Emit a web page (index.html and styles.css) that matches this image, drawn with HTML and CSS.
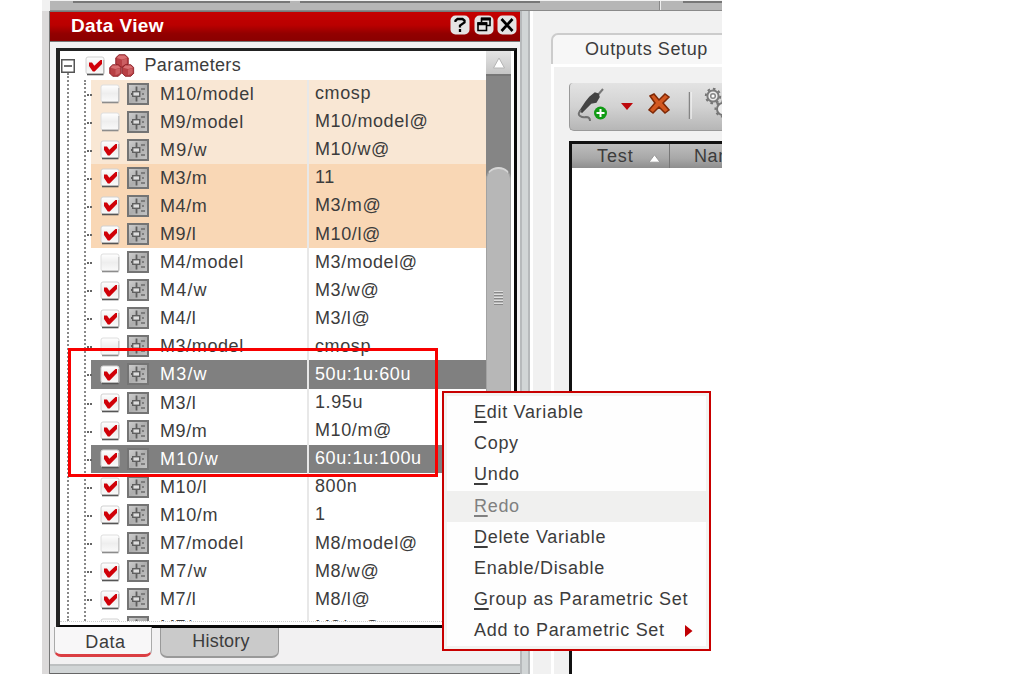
FILE: index.html
```html
<!DOCTYPE html>
<html lang="en">
<head>
<meta charset="utf-8">
<title>Data View</title>
<link rel="stylesheet" href="styles.css">
</head>
<body>
<svg class="defs" width="0" height="0">
  <defs>
    <linearGradient id="boxg" x1="0" y1="0" x2="0" y2="1"><stop offset="0" stop-color="#fff"/><stop offset=".5" stop-color="#eee"/><stop offset="1" stop-color="#fafafa"/></linearGradient>
    <linearGradient id="parg" x1="0" y1="0" x2="1" y2="1"><stop offset="0" stop-color="#d0d0d0"/><stop offset=".5" stop-color="#adadad"/><stop offset="1" stop-color="#c6c6c6"/></linearGradient>
    <symbol id="off" viewBox="0 0 20 20"><rect x="1" y="1" width="18" height="17" rx="2" fill="url(#boxg)" stroke="#dedede"/><path d="M2 18.5h16.5" stroke="#8c8c8c" stroke-width="1.6"/><path d="M18.8 4v14" stroke="#bbb"/></symbol>
    <symbol id="on" viewBox="0 0 20 20"><rect x="1" y="1" width="18" height="17" rx="2" fill="url(#boxg)" stroke="#d0d0d0"/><path d="M2 18.5h16.5" stroke="#555" stroke-width="1.6"/><path d="M18.8 4v14" stroke="#aaa"/><path d="M4 6.5h3l2.3 3.2L15.500 4H17v4L9.700 15.500H7.800L4 10z" fill="#d00008"/></symbol>
    <symbol id="par" viewBox="0 0 22 22"><rect x="1" y="1" width="20" height="20" fill="url(#parg)" stroke="#747474" stroke-width="2"/><path d="M9.500 3.500v15M4 11h2" stroke="#5e5e5e" stroke-width="1.8"/><rect x="5.700" y="8.700" width="7" height="4.600" fill="#ddd" stroke="#606060" stroke-width="1.400"/><path d="M14 6h4M15 11h2M14 16h4" stroke="#6c6c6c" stroke-width="1.600"/></symbol>
    <symbol id="cube" viewBox="0 0 14 14"><path d="M4 .8h6l3.2 3V10L10 13.2H4L.8 10V3.8z" fill="#b84045" stroke="#8b2028"/><path d="M4 1.5h5.7L12.4 4 7 5.4 1.8 4z" fill="#d87073"/><path d="M7 6l4.8-1.4v5L7 12z" fill="#cb5e62"/></symbol>
  </defs>
</svg>
<div class="app">
  <div class="topbar"><i class="edge one"></i><i class="edge two"></i><i class="notch"></i><i class="edge three"></i></div>
  <div class="main">
    <div class="gutter"></div>
    <section class="dock">
      <header class="title"><span>Data View</span>
        <svg viewBox="0 0 20 20"><rect x=".5" y=".5" width="19" height="19" rx="5" fill="#e4e4e4"/><path d="M5.500 7V5.500L7.500 4h5l2 1.500v2L10 10.500v2M10 14v3" fill="none" stroke="#000" stroke-width="2.300"/></svg>
        <svg viewBox="0 0 20 20"><rect x=".5" y=".5" width="19" height="19" rx="5" fill="#e4e4e4"/><path d="M7.500 7V3.500h8.500v7h-3.500M4 8h8.500v7.500H4z" fill="none" stroke="#000" stroke-width="1.600"/><path d="M7 4h9.700M3.500 8.700h9.700" stroke="#000" stroke-width="3"/></svg>
        <svg viewBox="0 0 20 20"><rect x=".5" y=".5" width="19" height="19" rx="5" fill="#e4e4e4"/><path d="M4.500 4l11 12M15.500 4l-11 12" stroke="#000" stroke-width="2.700"/></svg>
      </header>
      <div class="list">
        <div class="tree">
          <div class="root"><svg class="exp" viewBox="0 0 14 14"><path d="M.75.75h12.5v12.5H.75z" fill="#fff" stroke="#555" stroke-width="1.500"/><path d="M3 7h8" stroke="#333" stroke-width="1.400"/></svg><svg class="cb"><use href="#on"/></svg><svg class="cubes" viewBox="0 0 26 24"><use href="#cube" x="6" y="0" width="14" height="14"/><use href="#cube" x="0" y="10" width="13" height="13"/><use href="#cube" x="12.500" y="10" width="13" height="13"/></svg><span>Parameters</span></div>
          <div class="rows">
            <div class="row lt"><svg class="cb"><use href="#off"/></svg><svg class="pi"><use href="#par"/></svg><span class="n">M10/model</span><span class="v">cmosp</span></div>
            <div class="row lt"><svg class="cb"><use href="#off"/></svg><svg class="pi"><use href="#par"/></svg><span class="n">M9/model</span><span class="v">M10/model@</span></div>
            <div class="row lt"><svg class="cb"><use href="#on"/></svg><svg class="pi"><use href="#par"/></svg><span class="n wide">M9/w</span><span class="v">M10/w@</span></div>
            <div class="row dk"><svg class="cb"><use href="#on"/></svg><svg class="pi"><use href="#par"/></svg><span class="n">M3/m</span><span class="v">11</span></div>
            <div class="row dk"><svg class="cb"><use href="#on"/></svg><svg class="pi"><use href="#par"/></svg><span class="n">M4/m</span><span class="v">M3/m@</span></div>
            <div class="row dk"><svg class="cb"><use href="#on"/></svg><svg class="pi"><use href="#par"/></svg><span class="n">M9/l</span><span class="v">M10/l@</span></div>
            <div class="row"><svg class="cb"><use href="#off"/></svg><svg class="pi"><use href="#par"/></svg><span class="n">M4/model</span><span class="v">M3/model@</span></div>
            <div class="row"><svg class="cb"><use href="#on"/></svg><svg class="pi"><use href="#par"/></svg><span class="n wide">M4/w</span><span class="v">M3/w@</span></div>
            <div class="row"><svg class="cb"><use href="#on"/></svg><svg class="pi"><use href="#par"/></svg><span class="n">M4/l</span><span class="v">M3/l@</span></div>
            <div class="row"><svg class="cb"><use href="#off"/></svg><svg class="pi"><use href="#par"/></svg><span class="n">M3/model</span><span class="v">cmosp</span></div>
            <div class="row sel"><svg class="cb"><use href="#on"/></svg><svg class="pi"><use href="#par"/></svg><span class="n wide">M3/w</span><span class="v">50u:1u:60u</span></div>
            <div class="row"><svg class="cb"><use href="#on"/></svg><svg class="pi"><use href="#par"/></svg><span class="n">M3/l</span><span class="v">1.95u</span></div>
            <div class="row"><svg class="cb"><use href="#on"/></svg><svg class="pi"><use href="#par"/></svg><span class="n">M9/m</span><span class="v">M10/m@</span></div>
            <div class="row sel"><svg class="cb"><use href="#on"/></svg><svg class="pi"><use href="#par"/></svg><span class="n wide">M10/w</span><span class="v">60u:1u:100u</span></div>
            <div class="row"><svg class="cb"><use href="#on"/></svg><svg class="pi"><use href="#par"/></svg><span class="n">M10/l</span><span class="v">800n</span></div>
            <div class="row"><svg class="cb"><use href="#on"/></svg><svg class="pi"><use href="#par"/></svg><span class="n">M10/m</span><span class="v">1</span></div>
            <div class="row"><svg class="cb"><use href="#off"/></svg><svg class="pi"><use href="#par"/></svg><span class="n">M7/model</span><span class="v">M8/model@</span></div>
            <div class="row"><svg class="cb"><use href="#on"/></svg><svg class="pi"><use href="#par"/></svg><span class="n wide">M7/w</span><span class="v">M8/w@</span></div>
            <div class="row"><svg class="cb"><use href="#on"/></svg><svg class="pi"><use href="#par"/></svg><span class="n">M7/l</span><span class="v">M8/l@</span></div>
            <div class="row"><svg class="cb"><use href="#on"/></svg><svg class="pi"><use href="#par"/></svg><span class="n">M7/m</span><span class="v">M8/m@</span></div>
          </div>
        </div>
        <div class="scroll"><div class="up"><svg viewBox="0 0 14 12"><path d="M7 1l5.500 10h-11z" fill="#fff" stroke="#b5b5b5"/></svg></div><div class="thumb"><i class="grip"></i></div></div>
      </div>
      <div class="tabs"><div class="tab active">Data</div><div class="tab">History</div></div>
      <div class="foot"></div>
    </section>
    <div class="split"></div>
    <section class="outputs">
      <div class="otab">Outputs Setup</div>
      <div class="pane">
        <div class="tools">
          <svg width="153" height="47" viewBox="0 0 153 47"><path d="M33 6l-6 7" stroke="#777" stroke-width="2"/><path d="M20 14l5-4 3 1 1 3-3 5-5 1-9 9-2-1 6-9z" fill="#444" stroke="#444" stroke-width="1.500"/><path d="M11 27q-4 4-1 6q3 2 6 1q4 0 4 4" fill="none" stroke="#707070" stroke-width="2"/><circle cx="30.500" cy="30" r="6.500" fill="#109b14"/><path d="M26.500 30h8M30.500 26v8" stroke="#fff" stroke-width="2"/><path d="M51 20h12l-6 7z" fill="#bd080c"/><path d="M80 13l4-2 5 6 6-6 4 3-6 6 6 7-4 3-6-6-6 6-4-3 6-7z" fill="#d35820" stroke="#7e2806" stroke-width="1.500"/><path d="M119.500 9v27" stroke="#858585" stroke-width="1.500"/><path d="M121 9v27" stroke="#fff"/><circle cx="143" cy="13" r="5.600" fill="#eee" stroke="#7c7c7c" stroke-width="2"/><circle cx="143" cy="13" r="7.200" fill="none" stroke="#777" stroke-width="2" stroke-dasharray="2.600 3"/><circle cx="143" cy="13" r="2.300" fill="#fff" stroke="#888" stroke-width="1.500"/><circle cx="153" cy="26" r="6" fill="#eee" stroke="#777" stroke-width="2"/><circle cx="153" cy="26" r="7.500" fill="none" stroke="#777" stroke-width="2" stroke-dasharray="2.600 3"/></svg>
        </div>
        <div class="table"><div class="thead"><span class="th">Test<svg width="13" height="9" viewBox="0 0 13 9"><path d="M6.500 .8l5.500 7.400H1z" fill="#fff" stroke="#999"/></svg></span><span class="th2">Name</span></div></div>
      </div>
    </section>
  </div>
</div>
<div class="highlight"></div>
<div class="menu">
  <div><u>E</u>dit Variable</div>
  <div>Copy</div>
  <div><u>U</u>ndo</div>
  <div class="dis"><u>R</u>edo</div>
  <div><u>D</u>elete Variable</div>
  <div>Enable/Disable</div>
  <div><u>G</u>roup as Parametric Set</div>
  <div>Add to Parametric Set<svg viewBox="0 0 8 12"><path d="M0 0l7.500 6L0 12z" fill="#c00004"/></svg></div>
</div>
</body>
</html>
```
FILE: styles.css
```css
* { box-sizing: border-box; }
body { margin: 0; width: 1013px; height: 677px; overflow: hidden; background: #fff; position: relative; font: 18px "Liberation Sans", sans-serif; letter-spacing: .6px; color: #3c3c3c; }
svg { display: block; flex: none; }
.defs { position: absolute; }
.app { width: 680px; height: 674px; margin-left: 42px; display: flex; flex-direction: column; overflow: hidden; background: #f1f1f1; }
.topbar { height: 11px; flex: none; background: #b6b6b6; border-top: 1px solid #f2f2f2; border-bottom: 1px solid #8a8a8a; margin-left: 8px; display: flex; padding-left: 23px; }
.edge { height: 2px; background: #777; }
.one { width: 217px; }
.two { width: 240px; margin-left: 10px; }
.notch { width: 2px; margin-left: 119px; background: #efefef; border-left: 1px solid #888; }
.three { flex: 1; margin-left: 22px; }
.main { flex: 1; display: flex; min-height: 0; }
.gutter { width: 8px; background: #dcdada; border-right: 1px solid #777; }
.dock { width: 470px; display: flex; flex-direction: column; background: #f2f1f2; }
.title { height: 31px; flex: none; background: linear-gradient(#c50000, #ba0000 45%, #920000 75%, #8a0000); border-top: 1px solid #777; border-bottom: 1px solid #777; display: flex; align-items: center; gap: 3.500px; padding: 0 3px 3px 21px; color: #fff; font-weight: bold; font-size: 19px; letter-spacing: .4px; }
.title span { flex: 1; padding-top: 2px; }
.title svg { width: 20px; height: 20px; }
.list { height: 580px; flex: none; margin: 6px 3px 0 6px; border: solid #080808; border-width: 3px 3px 3px 4px; border-top-color: #222; border-left-color: #222; display: flex; background: #fff; padding: 0 3px 3px 0; }
.tree { flex: 1; height: 571px; overflow: hidden; position: relative; border-bottom: 1px dotted #ccc; }
.root { height: 28.500px; display: flex; align-items: center; padding: 1px 0 0 1px; letter-spacing: .35px; }
.exp { width: 14px; height: 14px; margin-right: 9.500px; }
.cb { width: 20px; height: 20px; }
.cubes { width: 26px; height: 24px; margin: 0 10px 0 4px; }
.rows { margin-left: 24px; border-left: 2px dotted #888; padding-left: 5px; }
.row { height: 28.100px; display: flex; align-items: center; position: relative; }
.row::before { content: ""; position: absolute; left: -4px; width: 3px; border-top: 2px dotted #666; top: 14px; }
.row .cb { margin: 1px 7px 0 9px; }
.pi { width: 22px; height: 22px; margin-right: 11px; }
.n { width: 149px; line-height: 28.100px; border-right: 2px solid #e8e8e8; }
.wide { letter-spacing: 1.200px; }
.v { flex: 1; padding-left: 6px; }
.lt { background: #f9e7d4; }
.dk { background: #f9d7b5; }
.sel { background: #808080; color: #fff; }
.tree::after { content: ""; position: absolute; left: 7px; top: 22px; bottom: 0; border-left: 2px dotted #888; }
.scroll { width: 25px; background: #858585; display: flex; flex-direction: column; }
.up { height: 25px; background: linear-gradient(#e4e4e4, #c5c5c5); border-bottom: 2px solid #777; display: grid; place-items: center; }
.up svg { width: 14px; height: 12px; }
.thumb { flex: 1; margin-top: 91px; border: 1px solid #a2a2a2; border-top: 2px solid #d6d6d6; border-radius: 12px 12px 0 0; background: #b7b7b7; padding: 122px 0 0 7px; }
.grip { display: block; width: 9px; height: 14px; background: repeating-linear-gradient(#dedede 0 1px, #888 1px 2px, #b7b7b7 2px 3px); }
.tabs { height: 36px; display: flex; gap: 8px; padding-left: 4px; }
.tab { height: 30px; width: 119px; border: 1px solid #999; border-top: 0; border-bottom: 2px solid #999; border-radius: 0 0 7px 7px; background: #cacaca; text-align: center; line-height: 27px; letter-spacing: .2px; padding-left: 3px; }
.tab.active { width: 98px; background: #f8f7f8; border-color: #aaa; border-bottom: 3px solid #db3e43; line-height: 31px; letter-spacing: .6px; padding-left: 5px; margin-top: -1px; }
.foot { flex: 1; background: #d1d5d6; border-top: 2px solid #bdc0c1; border-bottom: 1px solid #666; }
.split { width: 10px; background: #d1d5d6; border: solid #b6b9bb; border-width: 0 2px; }
.outputs { flex: 1; min-width: 0; border-left: 3px solid #fff; padding: 22px 0 0 18px; display: flex; flex-direction: column; }
.otab { height: 31px; flex: none; border: solid #ccc; border-width: 2px 0 0 2px; border-radius: 7px 0 0 0; background: #f7f7f7; padding: 3px 0 0 32px; line-height: 22px; white-space: nowrap; letter-spacing: .6px; }
.pane { flex: 1; border-left: 3px solid #fff; border-top: 3px solid #fff; padding: 16px 0 0 15px; display: flex; flex-direction: column; }
.tools { height: 48px; flex: none; border: solid #999; border-width: 0 0 1px 1px; border-radius: 4px 0 0 5px; background: linear-gradient(#e3e3e3, #d2d2d2 50%, #b6b6b6); overflow: hidden; }
.table { flex: 1; margin-top: 10px; border: solid #111; border-width: 3px 0 0 3px; background: #fff; overflow: hidden; }
.thead { height: 24px; background: linear-gradient(#bdbdbd, #a8a8a8 60%, #8e8e8e); display: flex; line-height: 24px; }
.th { width: 98px; flex: none; padding-left: 25px; border-right: 1px solid #777; display: flex; align-items: center; gap: 14px; letter-spacing: .9px; }
.th svg { margin-top: 4px; }
.th2 { padding-left: 24px; }
.highlight { position: absolute; left: 68px; top: 348px; width: 370px; height: 129px; border: 3px solid #f80000; }
.menu { position: absolute; left: 442px; top: 391px; width: 269px; height: 260px; border: 2px solid #c80000; background: #fefefe; padding-top: 4px; box-shadow: inset 0 0 0 3px #f3f3f1; }
.menu div { height: 31.200px; line-height: 31.200px; padding-left: 30px; display: flex; align-items: center; white-space: pre; letter-spacing: .7px; }
.menu u { text-underline-offset: 3px; text-decoration-thickness: 1.500px; }
.menu .dis { background: #f0f0ef; color: #808080; }
.menu svg { width: 8px; height: 12px; margin-left: 20px; }
```
